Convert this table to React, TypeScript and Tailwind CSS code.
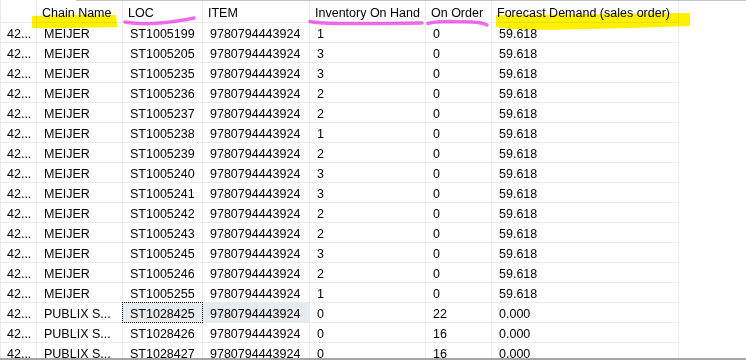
const cols = [
  { key: "rn", w: "w-[36px]", label: "" },
  { key: "chain", w: "w-[86px]", label: "Chain Name" },
  { key: "loc", w: "w-[80px]", label: "LOC" },
  { key: "item", w: "w-[107px]", label: "ITEM" },
  { key: "onhand", w: "w-[116px]", label: "Inventory On Hand" },
  { key: "onorder", w: "w-[66px]", label: "On Order" },
  { key: "demand", w: "w-[187px]", label: "Forecast Demand (sales order)" },
];

type Row = { chain: string; loc: string; onhand: string; onorder: string; demand: string };

const meijer: [string, string][] = [
  ["ST1005199", "1"],
  ["ST1005205", "3"],
  ["ST1005235", "3"],
  ["ST1005236", "2"],
  ["ST1005237", "2"],
  ["ST1005238", "1"],
  ["ST1005239", "2"],
  ["ST1005240", "3"],
  ["ST1005241", "3"],
  ["ST1005242", "2"],
  ["ST1005243", "2"],
  ["ST1005245", "3"],
  ["ST1005246", "2"],
  ["ST1005255", "1"],
];

const rows: Row[] = [
  ...meijer.map(([loc, onhand]) => ({ chain: "MEIJER", loc, onhand, onorder: "0", demand: "59.618" })),
  { chain: "PUBLIX S...", loc: "ST1028425", onhand: "0", onorder: "22", demand: "0.000" },
  { chain: "PUBLIX S...", loc: "ST1028426", onhand: "0", onorder: "16", demand: "0.000" },
  { chain: "PUBLIX S...", loc: "ST1028427", onhand: "0", onorder: "16", demand: "0.000" },
];

const cell = "shrink-0 border-r border-b border-[#ebebeb] whitespace-nowrap";

export default function App() {
  return (
    <div
      className="relative w-[746px] h-[361px] overflow-hidden bg-white text-black text-[12.5px] leading-[14px]"
      style={{ fontFamily: '"Liberation Sans", Arial, sans-serif' }}
    >
      <div className="h-[358px] overflow-hidden">
        <div className="w-[679px] border-l border-[#ebebeb]">
          {/* header */}
          <div className="flex">
            {cols.map((c) => (
              <div key={c.key} className={`${cell} overflow-hidden ${c.w} h-[23px] pt-[6px] pl-[5px]`}>
                {c.label}
              </div>
            ))}
          </div>

          {rows.map((r, i) => {
            const sel = i === 14;
            return (
              <div key={i} className="flex">
                <div className={`${cell} overflow-hidden w-[36px] h-[20px] pt-[4px] pl-[6px]`}>42...</div>
                <div className={`${cell} overflow-hidden w-[86px] h-[20px] pt-[4px] pl-[7px]`}>{r.chain}</div>
                <div className={`${cell} relative w-[80px] h-[20px] pt-[4px] pl-[7px] ${sel ? "bg-[#e6ebf0]" : ""}`}>
                  {r.loc}
                  {sel && <span className="absolute -left-px -top-px -right-px -bottom-px border border-dotted border-black" />}
                </div>
                <div className={`${cell} overflow-hidden w-[107px] h-[20px] pt-[4px] pl-[7px] ${sel ? "bg-[#e6ebf0]" : ""}`}>9780794443924</div>
                <div className={`${cell} overflow-hidden w-[116px] h-[20px] pt-[4px] pl-[7px]`}>{r.onhand}</div>
                <div className={`${cell} overflow-hidden w-[66px] h-[20px] pt-[4px] pl-[7px]`}>{r.onorder}</div>
                <div className={`${cell} overflow-hidden w-[187px] h-[20px] pt-[4px] pl-[7px]`}>{r.demand}</div>
              </div>
            );
          })}
        </div>
      </div>
      <div className="h-[2px] bg-[#a6a6a6]" />

      {/* window edge at top */}
      <div className="absolute top-0 left-[76px] right-0 h-px bg-[#c4c4c4]" />

      {/* marker annotations */}
      <svg className="absolute inset-0 pointer-events-none mix-blend-multiply" width="746" height="361">
        <path d="M32 16 Q74 14 116 15 L117 27 Q74 28.5 32 28 Z" fill="#fff000" />
        <path d="M496 15 L690 13 L690 26 Q640 28 590 29 Q540 30.5 510 29 L496 27 Z" fill="#fff000" />
        <g fill="none" stroke="#f26cf0" strokeWidth="3.5" strokeLinecap="round">
          <path d="M125 22 Q140 25 160 23 Q180 21 194 18" />
          <path d="M310 21.5 Q320 23.5 345 23.5 Q390 23.5 422 23" />
          <path d="M428 23.5 Q434 21.5 450 21.5 L472 22 Q482 22.5 487 25" />
        </g>
      </svg>
    </div>
  );
}
